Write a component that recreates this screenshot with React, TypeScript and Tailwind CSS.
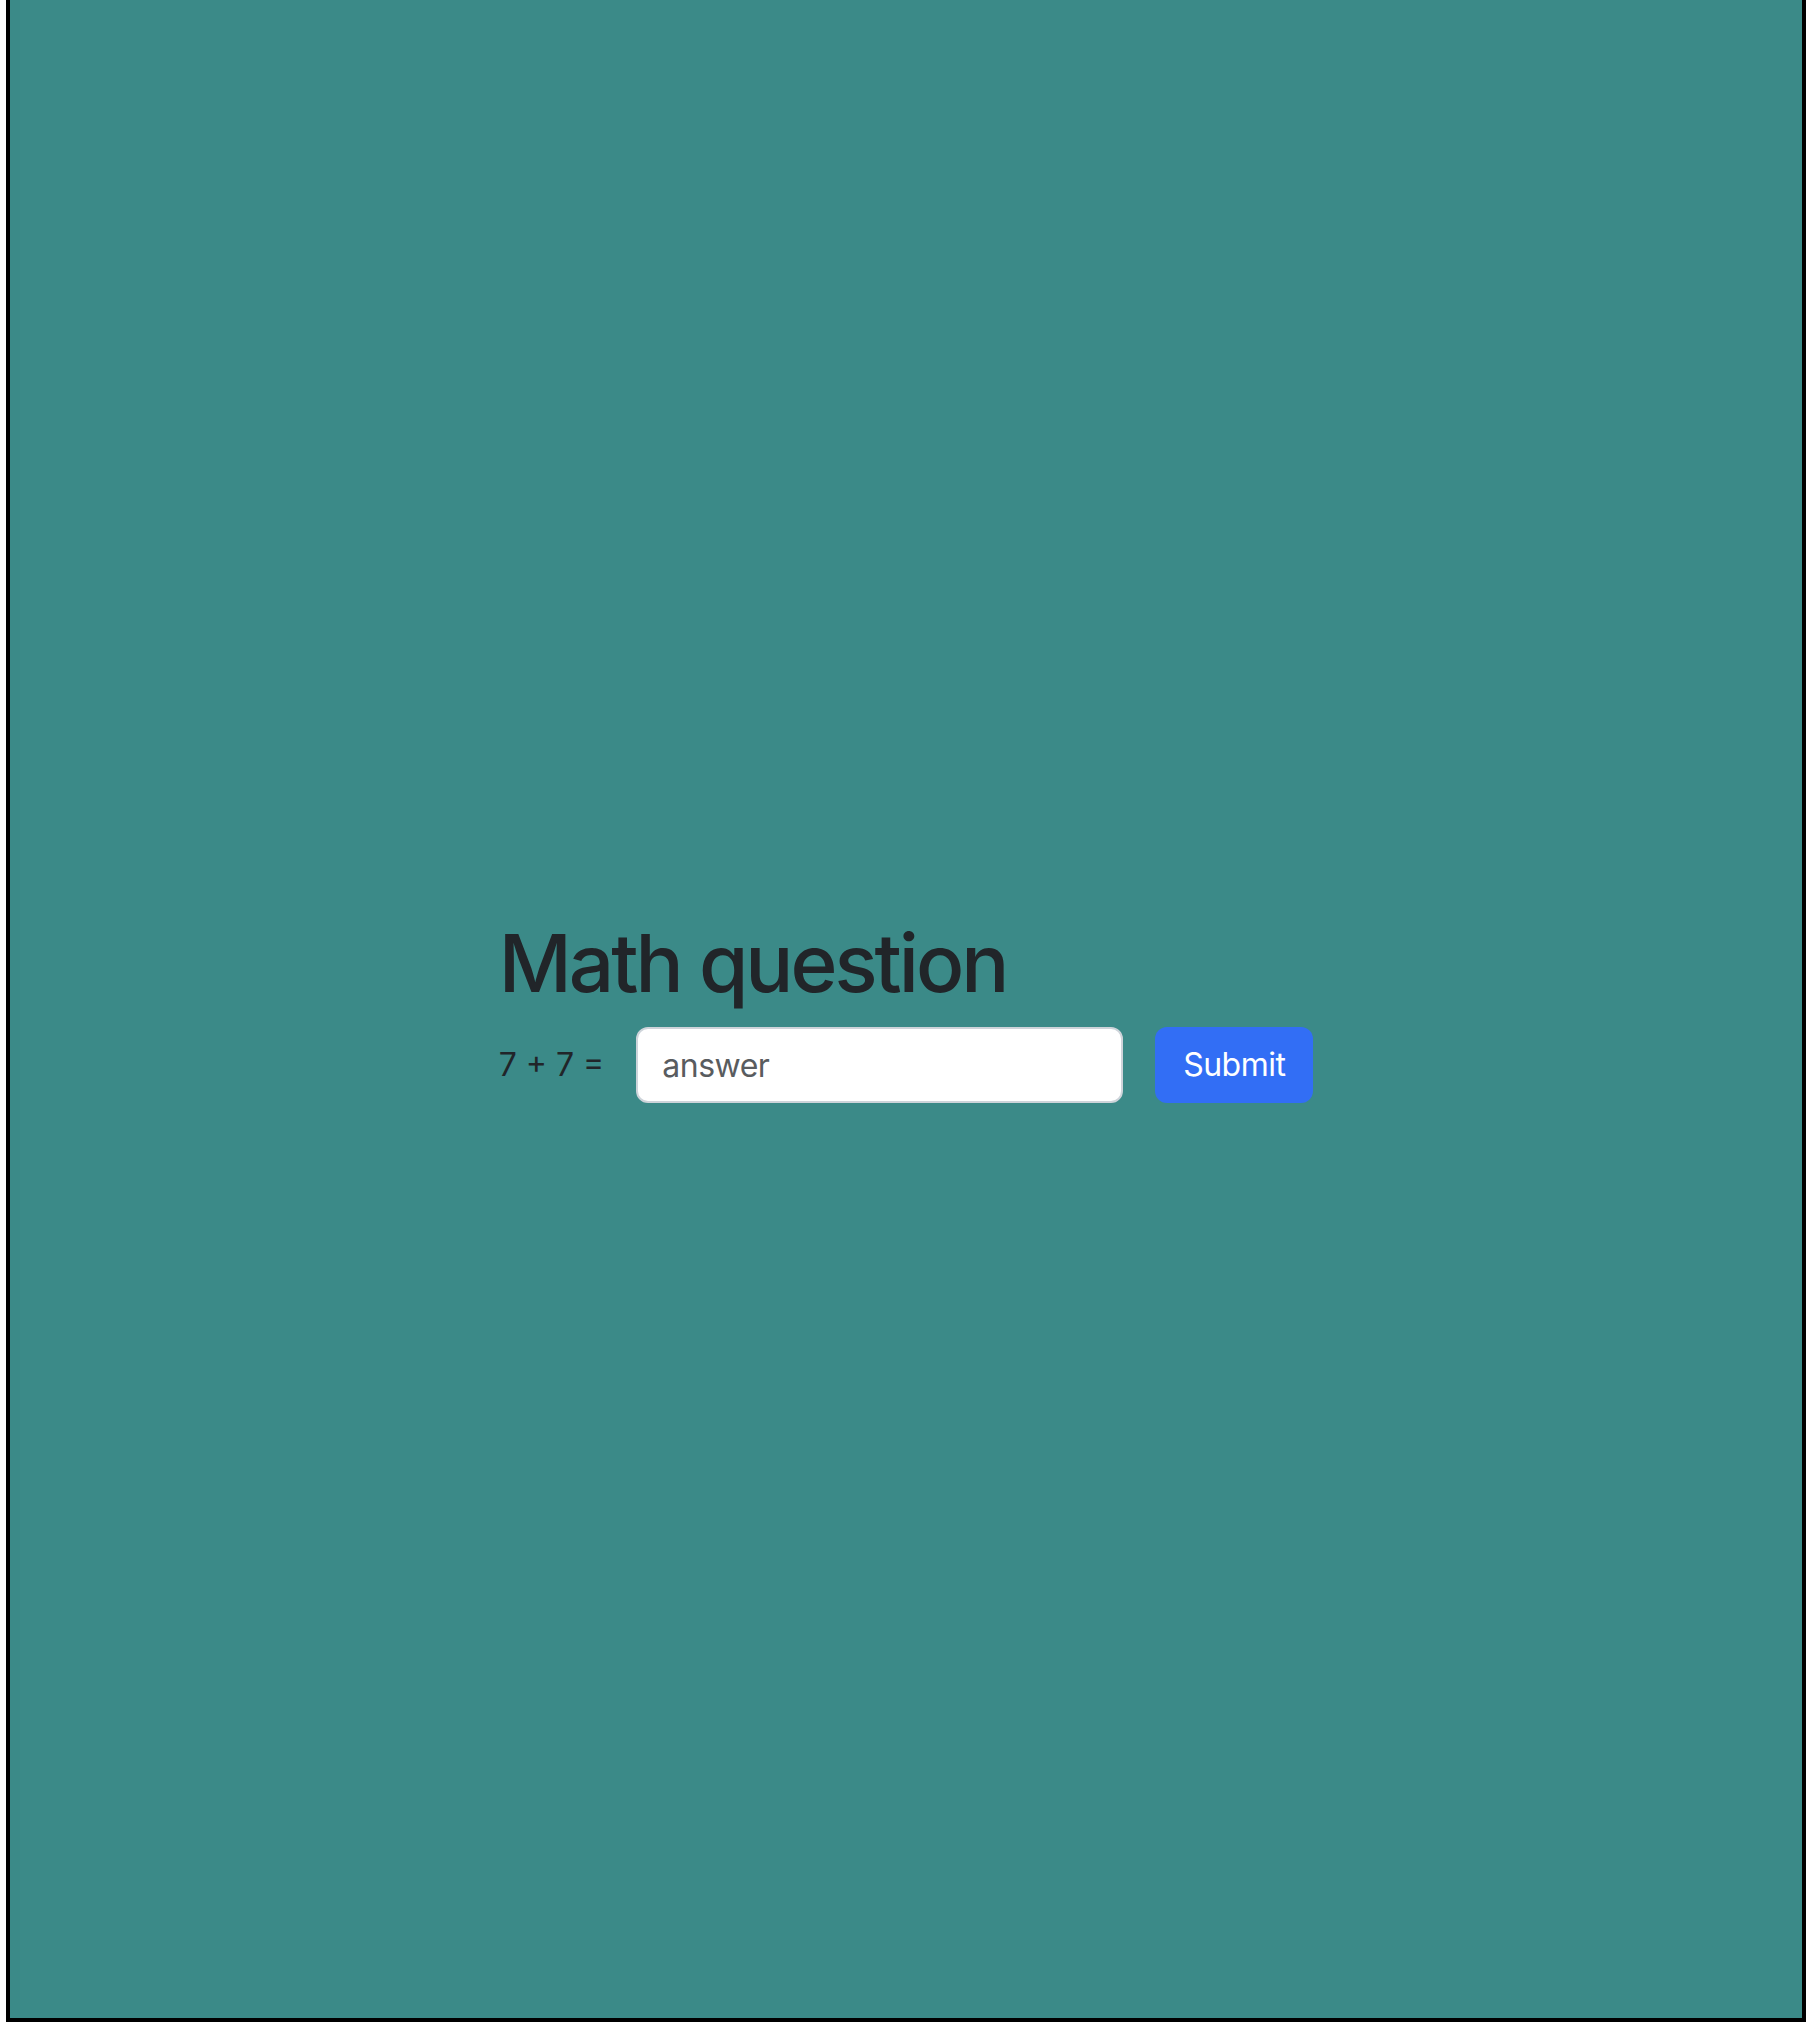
import React from "react";

export default function App() {
  return (
    <div className="w-[1808px] h-[2022px] bg-white">
      <div
        className="ml-[6px] w-[1800px] h-[2022px] border-x-4 border-b-4 border-black bg-[#3b8a88] flex items-center justify-center text-[#212529]"
        style={{ fontFamily: "Inter, 'Liberation Sans', sans-serif" }}
      >
        <div className="flex flex-col items-start">
          <h1 className="text-[80px] leading-[96px] font-medium mb-4 tracking-[-3px]">Math question</h1>
          <div className="flex items-center">
            <span className="text-[32px] leading-[48px] mr-8">7 + 7 =</span>
            <input
              type="text"
              placeholder="answer"
              className="w-[487px] h-[76px] rounded-[12px] border-2 border-[#ced4da] bg-white px-[24px] text-[32px] tracking-[-0.5px] text-[#212529] placeholder:text-[#595c5f] outline-none"
            />
            <button className="ml-8 w-[158px] h-[76px] rounded-[12px] bg-[#326ef5] text-white text-[32px] tracking-[-0.5px]">
              Submit
            </button>
          </div>
        </div>
      </div>
    </div>
  );
}
